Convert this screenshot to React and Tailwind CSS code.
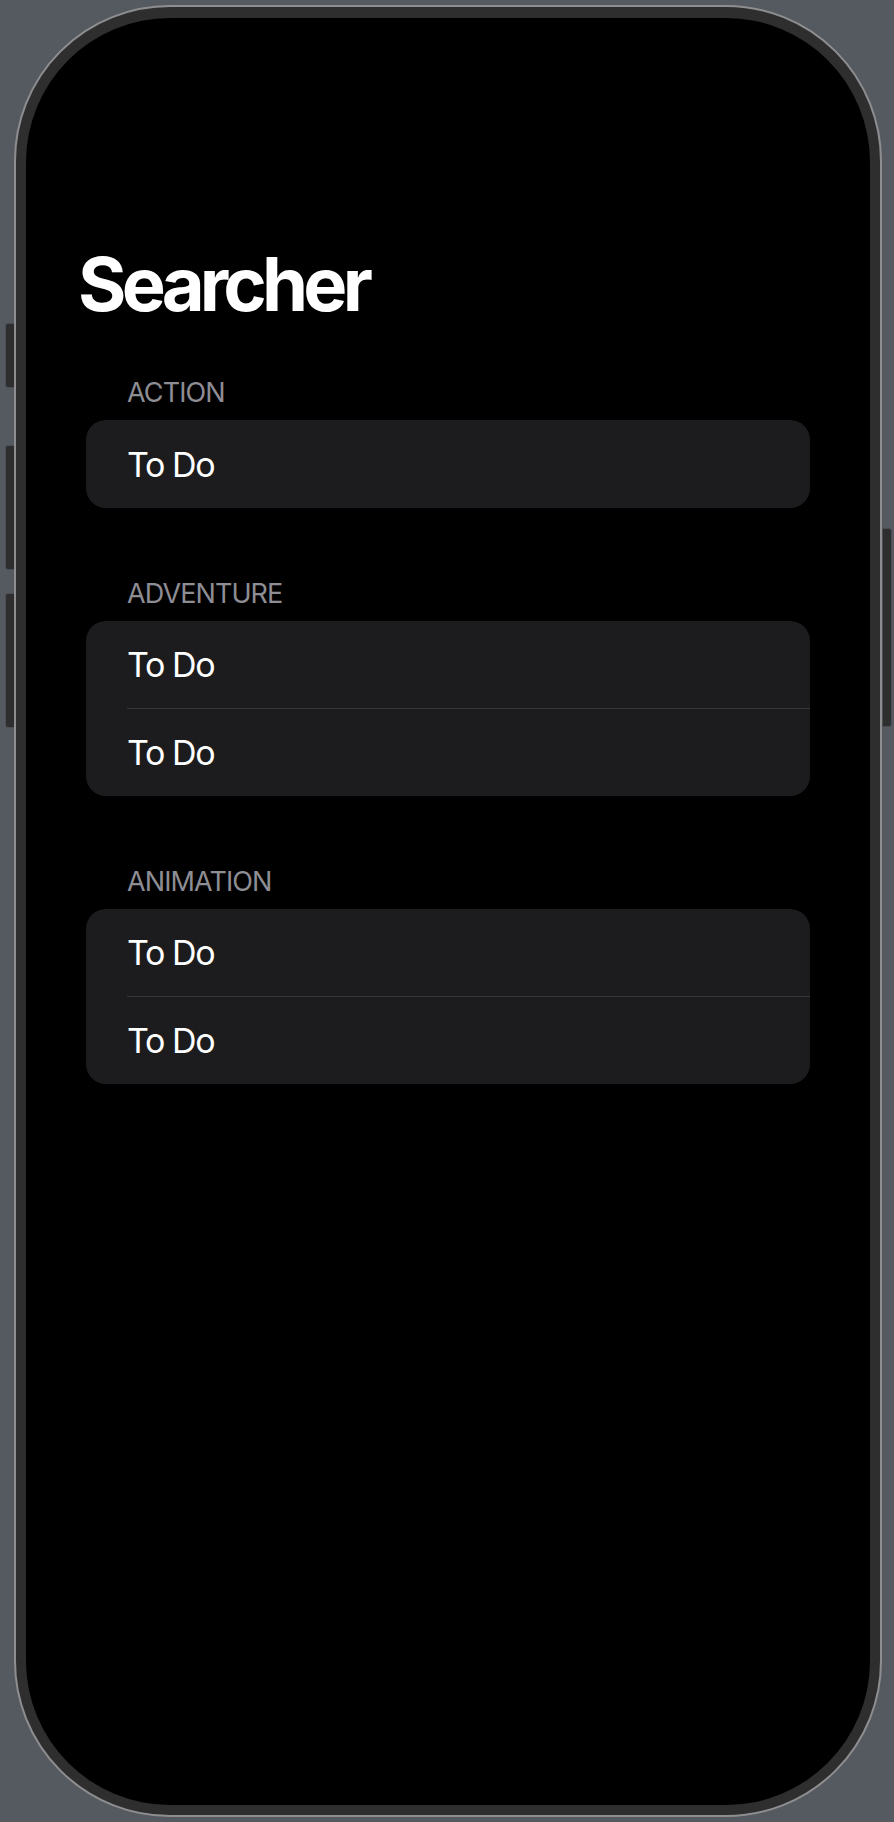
import React from "react";

function Section({ title, rows }) {
  return (
    <section className="flex flex-col gap-[14px]">
      <div className="pl-[101px] text-[27px] leading-[27px] text-[#8d8d93] tracking-[-0.9px]">{title}</div>
      <div className="mx-[60px] flex flex-col rounded-[20px] bg-[#1c1c1e] overflow-hidden">
        {rows.map((r, i) => (
          <div key={i} className="flex flex-col">
            {i > 0 && <div className="ml-[41px] h-px bg-[#38383a]" />}
            <div className={(rows.length === 1 ? "h-[88px]" : "h-[87px]") + " flex items-center pl-[41px] text-[34px] text-white tracking-[-1.4px]"}>
              {r}
            </div>
          </div>
        ))}
      </div>
    </section>
  );
}

const btn = "w-[10px] bg-[#2e2e2e] border border-[#4b4f55]";

export default function App() {
  return (
    <div
      className="flex w-[894px] h-[1822px] bg-[#555a61] overflow-hidden pt-[5px] pl-[5px]"
      style={{ fontFamily: "Inter, 'Noto Sans', 'Liberation Sans', sans-serif" }}
    >
      {/* left side buttons */}
      <div className="flex flex-col w-[9px] pt-[318px]">
        <div className={btn + " h-[65px] rounded-l-[3px]"} />
        <div className={btn + " h-[125px] mt-[57px] rounded-l-[3px]"} />
        <div className={btn + " h-[135px] mt-[23px] rounded-l-[3px]"} />
      </div>

      {/* phone */}
      <div className="w-[868px] h-[1812px] shrink-0 rounded-[156px] border-2 border-[#8e8e90] bg-[#2e2e2e] px-[10px] pt-[11px] pb-[10px]">
        <div className="flex flex-col h-full w-full rounded-[144px] bg-black overflow-hidden pt-[229px]">
          <h1 className="pl-[52px] text-[74px] leading-[74px] font-bold text-white tracking-[-4.8px]">
            Searcher
          </h1>
          <div className="flex flex-col gap-[72px] mt-[58px]">
            <Section title="ACTION" rows={["To Do"]} />
            <Section title="ADVENTURE" rows={["To Do", "To Do"]} />
            <Section title="ANIMATION" rows={["To Do", "To Do"]} />
          </div>
        </div>
      </div>

      {/* right side button */}
      <div className="flex flex-col w-[9px] pt-[523px]">
        <div className={btn + " h-[199px] rounded-r-[3px]"} />
      </div>
    </div>
  );
}
